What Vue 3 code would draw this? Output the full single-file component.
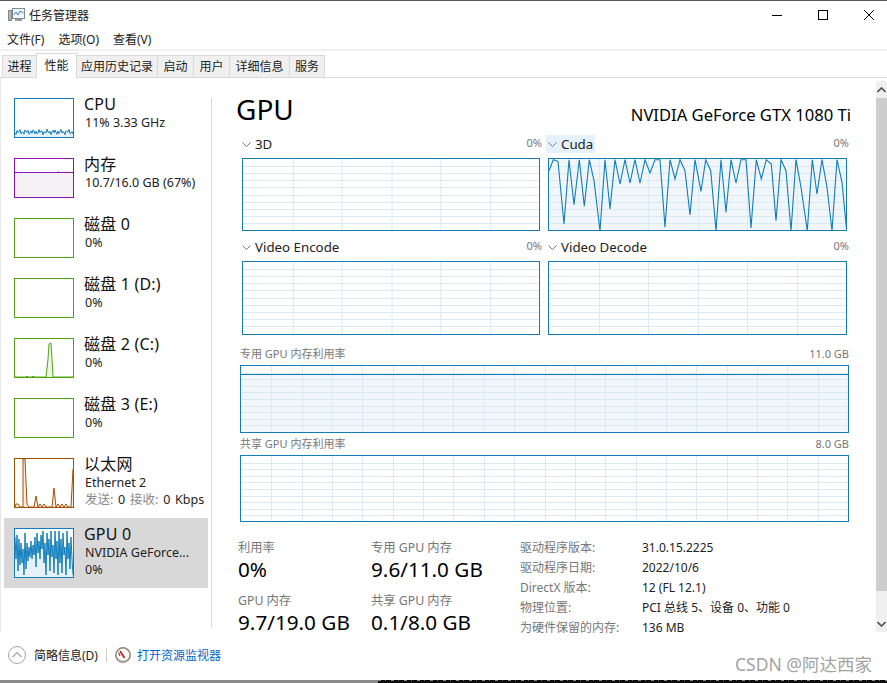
<script setup>
const raw = [[25,240],[38,207],[52,212],[70,400],[85,207],[100,342],[116,207],[131,347],[146,207],[160,270],[178,420],[193,207],[208,355],[223,207],[238,280],[253,207],[268,277],[283,207],[298,277],[313,207],[328,247],[343,207],[358,207],[373,410],[388,207],[403,265],[418,207],[433,240],[448,373],[463,207],[481,302],[495,207],[510,240],[526,420],[541,207],[556,365],[571,207],[586,277],[601,207],[616,207],[631,412],[647,207],[662,265],[677,207],[692,220],[706,390],[721,207],[736,240],[751,420],[766,207],[781,290],[800,420],[815,207],[829,310],[844,207],[859,290],[874,420],[889,207],[904,275],[918,420]]
const cudaPts = raw.map(([x, y]) => `${((x - 25) / 3).toFixed(1)},${((y - 205) / 3).toFixed(1)}`).join(' ')

function lines(size, n) { const a = []; for (let i = 1; i < n; i++) a.push(Math.round((size * i) / n) + 0.5); return a }

const engines = [
  [{ name: '3D', pct: '0%', h: 73 }, { name: 'Cuda', pct: '0%', h: 73, active: true }],
  [{ name: 'Video Encode', pct: '0%', h: 74 }, { name: 'Video Decode', pct: '0%', h: 74 }],
]
const h73 = lines(71, 10), v6 = lines(297, 6)
const hWide = lines(66, 10), vWide = lines(607, 20)

const cpuSeq = []
for (let x = 0; x <= 58; x++) {
  const y = 33 + 1.8 * Math.sin(x * 2.3) + 1.1 * Math.sin(x * 0.9 + 1)
  cpuSeq.push(`${x},${y.toFixed(1)}`)
}
const items = [
  { name: 'CPU', lines: ['11% 3.33 GHz'], color: '#117dbb', kind: 'cpu', h: 40 },
  { name: '内存', lines: ['10.7/16.0 GB (67%)'], color: '#8b12ae', kind: 'mem', h: 40 },
  { name: '磁盘 0', lines: ['0%'], color: '#4da60c', kind: 'empty', h: 40 },
  { name: '磁盘 1 (D:)', lines: ['0%'], color: '#4da60c', kind: 'empty', h: 40 },
  { name: '磁盘 2 (C:)', lines: ['0%'], color: '#4da60c', kind: 'disk', h: 40 },
  { name: '磁盘 3 (E:)', lines: ['0%'], color: '#4da60c', kind: 'empty', h: 40 },
  { name: '以太网', lines: ['Ethernet 2'], extra: true, color: '#a74f01', kind: 'net', h: 50 },
  { name: 'GPU 0', lines: ['NVIDIA GeForce...', '0%'], color: '#117dbb', kind: 'gpu', selected: true, h: 50 },
]
const thumb = {
  cpu: cpuSeq.join(' '),
  disk: '0,38 11,38 12,37 13,38 17,38 18,37 19,38 31,38 33,20 34,5 36,4 37,20 38,38 58,38',
  net: '0,48 1,45 3,45 5,48 8,48 8,0 10,0 12,45 14,48 19,48 21,37 23,48 25,45 27,48 29,45 31,48 37,48 39,29 41,48 43,45 45,48 47,45 49,48 51,45 53,48 56,48 58,10',
  gpu: '0,8 1,30 2,6 3,42 4,10 5,36 6,14 7,34 8,20 9,46 10,4 11,40 12,14 13,32 14,18 15,28 16,12 17,30 18,16 19,26 20,8 21,38 22,4 23,24 24,12 25,30 26,6 27,20 28,2 29,34 30,14 31,46 32,4 33,26 34,10 35,42 36,2 37,28 38,16 39,44 40,2 41,30 42,12 43,46 44,2 45,34 46,10 47,44 48,4 49,26 50,18 51,46 52,2 53,30 54,14 55,40 56,8 57,30 58,46',
}

const stats = [
  { k: '利用率', v: '0%' }, { k: '专用 GPU 内存', v: '9.6/11.0 GB' },
  { k: 'GPU 内存', v: '9.7/19.0 GB' }, { k: '共享 GPU 内存', v: '0.1/8.0 GB' },
]
const info = [
  ['驱动程序版本:', '31.0.15.2225'], ['驱动程序日期:', '2022/10/6'], ['DirectX 版本:', '12 (FL 12.1)'],
  ['物理位置:', 'PCI 总线 5、设备 0、功能 0'], ['为硬件保留的内存:', '136 MB'],
]
const tabs = [['进程', 35], ['性能', 41], ['应用历史记录', 82], ['启动', 37], ['用户', 37], ['详细信息', 61], ['服务', 36]]
</script>

<template>
  <div class="win">
    <header class="title">
      <svg class="appicon" width="17" height="16" viewBox="0 0 17 16">
        <rect x="0.5" y="3.5" width="3" height="10" fill="#b5b5b5" stroke="#8a8a8a" />
        <rect x="4.5" y="1.5" width="12" height="10" fill="#f2f7fb" stroke="#7d8a94" />
        <polyline points="5.5,8 8,5 10,8 12,4 15.5,6" fill="none" stroke="#3a87c8" />
        <rect x="7" y="12" width="7" height="2" fill="#9a9a9a" />
      </svg>
      <span class="title-text">任务管理器</span>
      <div class="winbtns">
        <svg width="12" height="12" viewBox="0 0 12 12"><path d="M1 6.5H11" stroke="#000" fill="none" /></svg>
        <svg width="12" height="12" viewBox="0 0 12 12"><rect x="1.5" y="1.5" width="9" height="9" stroke="#000" fill="none" /></svg>
        <svg width="12" height="12" viewBox="0 0 12 12"><path d="M1 1L11 11M11 1L1 11" stroke="#000" fill="none" /></svg>
      </div>
    </header>
    <nav class="menu"><span>文件(F)</span><span>选项(O)</span><span>查看(V)</span></nav>
    <div class="tabs">
      <span v-for="t in tabs" :key="t[0]" class="tab" :class="{ on: t[0] === '性能' }" :style="{ width: t[1] + 'px' }">{{ t[0] }}</span>
    </div>

    <main class="body">
      <aside class="side">
        <div v-for="it in items" :key="it.name" class="item" :class="{ sel: it.selected }">
          <svg class="thumb" width="60" :height="it.h" :viewBox="`0 0 58 ${it.h - 2}`" :style="{ borderColor: it.color }">
            <template v-if="it.kind === 'mem'">
              <rect x="0" y="13" width="58" height="25" fill="#f4f2f4" />
              <path d="M0 13.5H58" :stroke="it.color" fill="none" />
              <path d="M43 12.5H44" stroke="#c98ad8" fill="none" />
            </template>
            <template v-else-if="thumb[it.kind]">
              <polygon :points="`0,${it.h - 2} ${thumb[it.kind]} 58,${it.h - 2}`" :fill="it.color" fill-opacity="0.1" />
              <polyline :points="thumb[it.kind]" :stroke="it.color" fill="none" />
            </template>
          </svg>
          <div class="item-text">
            <div class="item-name">{{ it.name }}</div>
            <div v-for="l in it.lines" :key="l" class="item-sub">{{ l }}</div>
            <div v-if="it.extra" class="item-sub spaced"><span class="dim">发送:</span> 0 <span class="dim">接收:</span> 0 Kbps</div>
          </div>
        </div>
      </aside>

      <section class="main">
        <div class="head">
          <h1>GPU</h1>
          <div class="model">NVIDIA GeForce GTX 1080 Ti</div>
        </div>

        <div class="engines">
          <div v-for="(row, ri) in engines" :key="ri" class="engine-row">
            <div v-for="g in row" :key="g.name" class="engine">
              <div class="engine-head">
                <span class="engine-name" :class="{ active: g.active }">
                  <svg width="9" height="5" viewBox="0 0 9 5"><path d="M0.5 0.5L4.5 4.5L8.5 0.5" stroke="#777" fill="none" /></svg>
                  {{ g.name }}
                </span>
                <span class="pct">{{ g.pct }}</span>
              </div>
              <svg class="graph fill" :height="g.h" :viewBox="`0 0 297 ${g.h - 2}`" preserveAspectRatio="none">
                <rect v-if="g.active" x="0" y="0" width="297" :height="g.h" fill="#f1f6fa" />
                <path v-for="y in h73" :key="'h' + y" :d="`M0 ${y}H297`" class="gl" />
                <path v-for="x in v6" :key="'v' + x" :d="`M${x} 0V${g.h}`" class="gl" />
                <polyline v-if="g.active" :points="cudaPts" fill="none" stroke="#117dbb" stroke-width="1.1" />
              </svg>
            </div>
          </div>
        </div>

        <div class="wide-head first"><span>专用 GPU 内存利用率</span><span>11.0 GB</span></div>
        <svg class="graph" width="609" height="68" viewBox="0 0 607 66">
          <rect x="0" y="9" width="607" height="57" fill="#f1f6fa" />
          <path v-for="y in hWide" :key="'a' + y" :d="`M0 ${y}H607`" class="gl" />
          <path v-for="x in vWide" :key="'b' + x" :d="`M${x} 0V66`" class="gl" />
          <path d="M0 8.5H607" stroke="#117dbb" fill="none" />
        </svg>
        <div class="wide-head"><span>共享 GPU 内存利用率</span><span>8.0 GB</span></div>
        <svg class="graph" width="609" height="67" viewBox="0 0 607 65">
          <path v-for="y in hWide" :key="'c' + y" :d="`M0 ${y}H607`" class="gl" />
          <path v-for="x in vWide" :key="'d' + x" :d="`M${x} 0V65`" class="gl" />
        </svg>

        <div class="stats">
          <div class="stat-grid">
            <div v-for="s in stats" :key="s.k" class="stat">
              <div class="stat-k">{{ s.k }}</div>
              <div class="stat-v">{{ s.v }}</div>
            </div>
          </div>
          <div class="info">
            <template v-for="r in info" :key="r[0]">
              <span class="info-k">{{ r[0] }}</span><span class="info-v">{{ r[1] }}</span>
            </template>
          </div>
        </div>
      </section>

      <div class="scroll">
        <div class="arrow"><svg width="9" height="6" viewBox="0 0 9 6"><path d="M0.5 5L4.5 1L8.5 5" stroke="#505050" stroke-width="1.6" fill="none" /></svg></div>
        <div class="bar"></div>
        <div class="track"></div>
        <div class="arrow"><svg width="9" height="6" viewBox="0 0 9 6"><path d="M0.5 1L4.5 5L8.5 1" stroke="#505050" stroke-width="1.6" fill="none" /></svg></div>
      </div>
    </main>

    <footer class="foot">
      <svg width="18" height="18" viewBox="0 0 18 18"><circle cx="9" cy="9" r="8.5" fill="none" stroke="#a5a5a5" /><path d="M4.5 11L9 6.5L13.5 11" fill="none" stroke="#a5a5a5" stroke-width="1.2" /></svg>
      <span class="less">简略信息(D)</span>
      <span class="vsep"></span>
      <svg width="16" height="16" viewBox="0 0 16 16"><circle cx="8" cy="8" r="7.2" fill="#fbfaf7" stroke="#8a8478" stroke-width="1.5" /><path d="M5 4L9.5 11" stroke="#c8201c" stroke-width="1.7" /><path d="M3.5 5.5L5 9" stroke="#333" /><path d="M4 12.5A6 6 0 0 0 12 12.5" fill="none" stroke="#bbb" /></svg>
      <span class="link">打开资源监视器</span>
      <span class="mark">CSDN @阿达西家</span>
    </footer>
    <div class="under">
      <div class="under-left"></div>
      <div class="under-right"></div>
    </div>
  </div>
</template>

<style scoped>
.win {
  width: 887px;
  height: 683px;
  background: #fff;
  display: flex;
  flex-direction: column;
  overflow: hidden;
  font-family: "Noto Sans", "Noto Sans CJK SC", sans-serif;
  color: #000;
  box-sizing: border-box;
  border-top: 1px solid #555;
}
.title { height: 28px; flex: none; display: flex; align-items: center; padding-left: 8px; }
.appicon { margin-right: 4px; }
.title-text { font-size: 12px; color: #222; }
.winbtns { margin-left: auto; display: flex; gap: 34px; padding-right: 12px; }
.menu { height: 20px; flex: none; display: flex; gap: 14px; padding-left: 7px; font-size: 12px; align-items: center; border-bottom: 2px solid #f0f0f0; color: #222; }
.tabs { height: 26px; flex: none; display: flex; align-items: flex-end; padding-left: 2px; border-bottom: 1px solid #d9d9d9; }
.tab { font-size: 12px; height: 22px; line-height: 22px; text-align: center; box-sizing: border-box; background: #f0f0f0; border: 1px solid #d9d9d9; border-bottom: 0; margin-right: -1px; color: #222; flex: none; }
.tab.on { background: #fff; height: 25px; line-height: 24px; margin-bottom: -1px; position: relative; z-index: 1; }
.body { flex: 1; min-height: 0; display: flex; padding-top: 3px; box-shadow: inset 1px 0 0 #e8e8e8; }
.side { width: 211px; flex: none; margin-top: 17px; border-right: 1px solid #d9d9d9; height: 530px; }
.item { height: 60px; display: flex; padding-left: 14px; gap: 10px; box-sizing: border-box; }
.thumb { border: 1px solid; flex: none; box-sizing: border-box; background: #fff; }
.item-text { margin-top: -4px; }
.item-name { font-size: 16px; line-height: 20px; color: #111; letter-spacing: 0.2px; }
.item-sub { font-size: 12.5px; line-height: 17px; color: #222; margin-left: 1px; }
.spaced { word-spacing: 1.5px; }
.dim { color: #888; }
.item.sel { margin: 0 3px 0 4px; padding: 10px 0 0 10px; height: 70px; background: #d8d8d8; }
.main { flex: 1; min-width: 0; padding: 12px 27px 0 28px; }
.head { display: flex; justify-content: space-between; align-items: flex-end; height: 32px; margin-left: -4px; margin-right: -2px; }
h1 { font-size: 28px; line-height: 32px; font-weight: 400; margin: 0; }
.model { font-size: 16.6px; line-height: 20px; }
.engines { display: flex; flex-direction: column; margin-top: 10px; padding-left: 2px; }
.engine-row { display: grid; grid-template-columns: 298px 299px; gap: 8px; height: 103px; }
.engine-head { display: flex; justify-content: space-between; align-items: center; height: 18px; margin-bottom: 5px; }
.engine-name { font-size: 13.3px; color: #222; padding: 0 2px 0 0; display: flex; align-items: center; gap: 4px; height: 18px; }
.engine-name.active { background: #e5f1fb; margin-left: -2px; padding: 0 2px 0 2px; }
.pct { font-size: 11px; color: #777; margin-right: -2px; padding-bottom: 3px; }
.graph { display: block; border: 1px solid #117dbb; box-sizing: border-box; }
.graph.fill { width: 100%; }
.gl { stroke: #d9eaf4; fill: none; shape-rendering: crispEdges; }
.wide-head { display: flex; justify-content: space-between; font-size: 11px; line-height: 14px; color: #777; height: 22px; align-items: center; }
.wide-head.first { margin-top: 2px; }
.stats { display: flex; margin-top: 18px; }
.stat-grid { width: 282px; margin-left: -2px; display: grid; grid-template-columns: 133px 1fr; row-gap: 8px; }
.stat-k { font-size: 12.3px; line-height: 16px; color: #777; }
.stat-v { font-size: 20.7px; line-height: 27px; color: #000; }
.info { display: grid; grid-template-columns: 122px 1fr; font-size: 12px; line-height: 20px; margin-top: -2px; height: 100px; }
.info-k { color: #777; }
.info-v { color: #222; }
.scroll { width: 11px; flex: none; display: flex; flex-direction: column; background: #f0f0f0; }
.arrow { height: 17px; display: flex; align-items: center; justify-content: center; flex: none; }
.bar { height: 493px; background: #cdcdcd; flex: none; }
.track { flex: 1; }
.foot { height: 48px; box-sizing: border-box; padding: 0 0 2px 8px; flex: none; display: flex; align-items: center; font-size: 12px; position: relative; }
.less { margin-left: 8px; color: #222; }
.vsep { width: 1px; height: 14px; background: #ccc; margin: 0 8px; }
.link { color: #0066cc; margin-left: 6px; }
.mark { position: absolute; right: 15px; top: 20px; font-size: 17.5px; line-height: 24px; color: #a3a3a3; }
.under { height: 3px; flex: none; display: flex; overflow: hidden; }
.under-left { width: 378px; flex: none; background: #8a8a8a; }
.under-right { flex: 1; background: #0c0c0c repeating-linear-gradient(90deg, #888 0 3px, #0c0c0c 3px 7px, #666 7px 8px, #0c0c0c 8px 13px) 0 0 / 100% 1px no-repeat; }
</style>
